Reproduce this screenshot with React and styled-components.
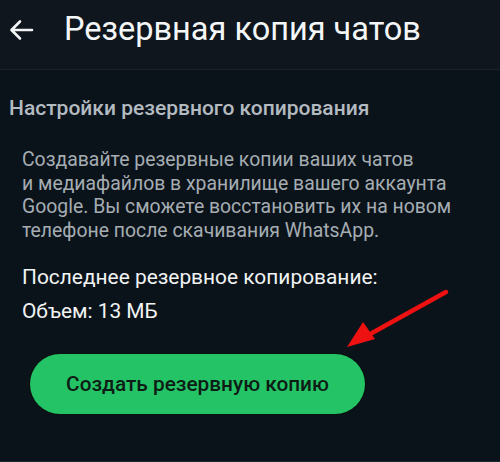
import React from "react";
import styled, { createGlobalStyle } from "styled-components";

const Global = createGlobalStyle`
  html, body { margin: 0; padding: 0; background: #0b131a; }
  body { font-family: Roboto, "Noto Sans", Arial, sans-serif; -webkit-font-smoothing: antialiased; }
`;

const Screen = styled.div`
  position: relative;
  width: 500px;
  height: 462px;
  background: #0b131a;
  overflow: hidden;
  border-bottom: 1px solid #1c2830;
  box-sizing: border-box;
`;

const Header = styled.header`
  height: 70px;
  display: flex;
  align-items: center;
  padding: 0 0 10px 9px;
  background: #0f161d;
  border-bottom: 1px solid #1a2229;
  box-sizing: border-box;
`;

const BackButton = styled.button`
  display: flex;
  align-items: center;
  justify-content: center;
  background: none;
  border: 0;
  padding: 0;
  width: 25px;
  height: 24px;
  color: #f2f4f5;
`;

const Title = styled.h1`
  margin: 0 0 0 30px;
  font-size: 32.5px;
  font-weight: 400;
  color: #f4f6f7;
  line-height: 1;
`;

const Content = styled.main`
  display: flex;
  flex-direction: column;
  padding: 26px 0 0 9px;
`;

const SectionTitle = styled.h2`
  margin: 0;
  font-size: 21px;
  font-weight: 500;
  color: #b3bbc1;
  line-height: 24px;
`;

const Description = styled.p`
  margin: 28px 0 0 13px;
  font-size: 19.4px;
  line-height: 23.5px;
  color: #a5adb3;
  width: 470px;
`;

const InfoLine = styled.div`
  margin: ${(p) => p.$top}px 0 0 13px;
  font-size: 20.9px;
  line-height: 24px;
  color: #f1f3f4;
`;

const PrimaryButton = styled.button`
  margin: 31px 0 0 21px;
  width: 335px;
  height: 60px;
  border: 0;
  border-radius: 30px;
  background: #24c365;
  color: #0d1c15;
  font-family: inherit;
  font-size: 20.8px;
  font-weight: 500;
  box-shadow: 0 0 0 1px #0a110e;
`;

const Annotation = styled.svg`
  position: absolute;
  left: 0;
  top: 0;
  pointer-events: none;
`;

export default function App() {
  return (
    <>
      <Global />
      <Screen>
        <Header>
          <BackButton aria-label="Назад">
            <svg width="25" height="22" viewBox="0 0 25 22" fill="none">
              <path d="M23 11H3M11 2.5L2.5 11L11 19.5" stroke="currentColor" strokeWidth="2.6" strokeLinecap="round" strokeLinejoin="round" />
            </svg>
          </BackButton>
          <Title>Резервная копия чатов</Title>
        </Header>
        <Content>
          <SectionTitle>Настройки резервного копирования</SectionTitle>
          <Description>
            Создавайте резервные копии ваших чатов
            <br />
            и медиафайлов в хранилище вашего аккаунта
            <br />
            Google. Вы сможете восстановить их на новом
            <br />
            телефоне после скачивания WhatsApp.
          </Description>
          <InfoLine $top={23}>Последнее резервное копирование:</InfoLine>
          <InfoLine $top={10}>Объем: 13 МБ</InfoLine>
          <PrimaryButton>Создать резервную копию</PrimaryButton>
        </Content>
        <Annotation width="500" height="462" viewBox="0 0 500 462">
          <line x1="446" y1="292" x2="372" y2="333" stroke="#ee1111" strokeWidth="4.5" strokeLinecap="round" />
          <polygon points="347,347 363,322 375,339" fill="#ee1111" />
        </Annotation>
      </Screen>
    </>
  );
}
